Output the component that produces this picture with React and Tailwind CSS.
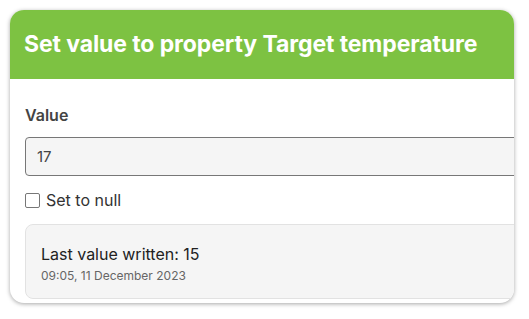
import React, { useState } from "react";

function App() {
  const [value, setValue] = useState("17");
  const [isNull, setIsNull] = useState(false);

  return (
    <div className="w-[529px] h-[319px] bg-white pt-[10px] pl-[10px] font-['Inter','Liberation_Sans',sans-serif]">
      <div className="w-[504px] h-[293px] rounded-[14px] overflow-hidden bg-white shadow-[0_1px_4px_rgba(0,0,0,0.35)]">
        {/* header */}
        <div className="h-[69px] bg-[#7dc242] pl-[14px] pt-[20px]">
          <h2 className="text-white font-bold text-[23px] leading-[28px] tracking-[-0.1px]">
            Set value to property Target temperature
          </h2>
        </div>

        {/* body */}
        <div className="pl-[15px] -mr-[20px] pt-[24px]">
          <label className="block text-[16px] font-semibold text-[#444] leading-[24px]">
            Value
          </label>
          <input
            value={value}
            onChange={(e) => setValue(e.target.value)}
            className="mt-[10px] w-full h-[39px] bg-[#f5f5f5] border border-[#777] rounded-[4px] px-[11px] text-[15px] text-[#444] outline-none caret-[#222]"
          />
          <label className="mt-[14px] flex items-center gap-[6px] text-[16px] text-[#333] leading-[20px]">
            <input
              type="checkbox"
              checked={isNull}
              onChange={(e) => setIsNull(e.target.checked)}
              className="appearance-none w-[15px] h-[15px] border border-[#777] rounded-[2px] bg-white"
            />
            Set to null
          </label>
          <div className="mt-[14px] h-[75px] bg-[#f5f5f5] border border-[#e2e2e2] rounded-[8px] pl-[15px] pt-[19px]">
            <div className="text-[16px] text-[#222] leading-[20px]">Last value written: 15</div>
            <div className="text-[12px] text-[#666] leading-[18px] mt-[3px]">09:05, 11 December 2023</div>
          </div>
        </div>
      </div>
    </div>
  );
}

export default App;
